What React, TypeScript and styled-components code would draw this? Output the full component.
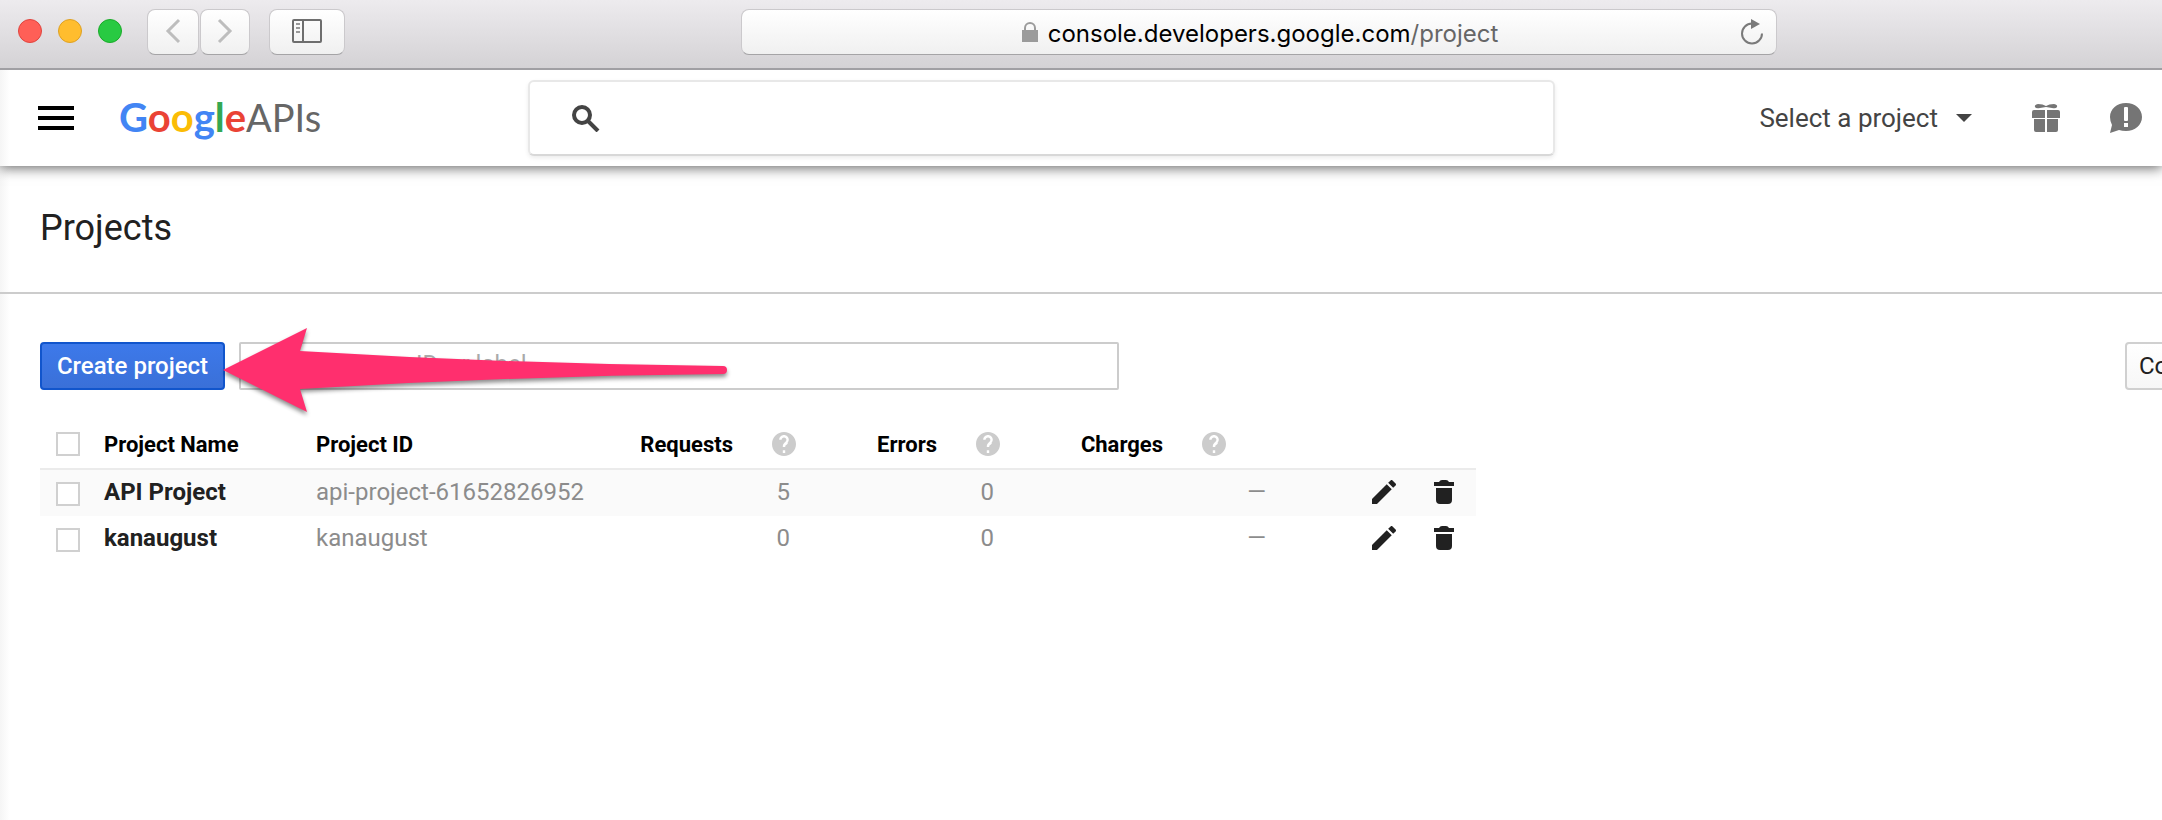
import React from "react";
import styled, { createGlobalStyle } from "styled-components";

const GlobalStyle = createGlobalStyle`
  *, *::before, *::after { box-sizing: border-box; }
  body {
    margin: 0;
    background: #fff;
    color: #212121;
    font-family: Roboto, "Liberation Sans", sans-serif;
    font-size: 24px;
    overflow-x: clip;
  }
  button, input { font: inherit; color: inherit; }
  svg { display: block; flex: none; }
`;

/* Browser chrome */

const BrowserBar = styled.header`
  display: flex;
  align-items: flex-start;
  height: 70px;
  padding: 9px 0 0 18px;
  background: linear-gradient(#edebee, #d4d2d5);
  border-bottom: 2px solid #a09fa3;
`;

const WindowControls = styled.div`
  display: flex;
  gap: 16px;
  padding-top: 10px;
  margin-right: 25px;
`;

const Light = styled.button<{ $fill: string; $edge: string }>`
  width: 24px;
  height: 24px;
  padding: 0;
  border-radius: 50%;
  border: 1px solid ${(p) => p.$edge};
  background: ${(p) => p.$fill};
`;

const ChromeButton = styled.button<{ $width: number; $gap?: number }>`
  display: flex;
  align-items: center;
  justify-content: center;
  flex: none;
  width: ${(p) => p.$width}px;
  height: 46px;
  margin-right: ${(p) => p.$gap ?? 0}px;
  padding: 0 0 2px;
  border: 1px solid #cbc9cc;
  border-bottom-color: #a5a4a6;
  border-radius: 8px;
  background: linear-gradient(#fff, #f0f0f0);
`;

const AddressField = styled.div`
  display: flex;
  align-items: center;
  flex: 1;
  height: 46px;
  margin: 0 385px 0 396px;
  padding: 0 12px 0 38px;
  border: 1px solid #cbc9cc;
  border-bottom-color: #a5a4a6;
  border-radius: 8px;
  background: linear-gradient(#fff, #f0f0f0);
`;

const Address = styled.div`
  display: flex;
  flex: 1;
  align-items: center;
  justify-content: center;
  gap: 10px;
  padding-top: 2px;
  color: #000;
  font-family: Inter, "Liberation Sans", sans-serif;
  font-size: 24px;

  svg { margin-bottom: 2px; }
`;

const AddressPath = styled.span`
  color: #666;
`;

const PlainButton = styled.button`
  display: flex;
  align-items: center;
  padding: 0;
  border: 0;
  background: none;
`;

/* Console header */

const Console = styled.div`
  min-height: calc(100vh - 70px);
  background: linear-gradient(to right, #f5f5f5, #fff 10px);
`;

const TopBar = styled.header`
  position: relative;
  display: flex;
  align-items: center;
  height: 96px;
  padding: 0 20px 0 38px;
  box-shadow: 0 2px 12px rgba(0, 0, 0, 0.6);
  background: linear-gradient(to right, #f5f5f5, #fff 10px);
  clip-path: inset(0 0 -20px 0);
`;

const Logo = styled.a`
  display: flex;
  align-items: baseline;
  width: 205px;
  margin: 0 204px 2px 45px;
  color: #666;
  font-family: Lato, sans-serif;
  font-size: 38px;
  line-height: 48px;
  text-decoration: none;
`;

const Wordmark = styled.span`
  font-size: 40px;
  font-weight: 700;
`;

const Letter = styled.span<{ $color: string }>`
  color: ${(p) => p.$color};
`;

const SearchBox = styled.label`
  display: flex;
  align-items: center;
  flex: 1;
  height: 76px;
  padding: 0 40px 0 42px;
  gap: 24px;
  border: 2px solid #e8e8e8;
  border-bottom-color: #d8d8d8;
  border-radius: 6px;
  background: #fff;
  box-shadow: 0 2px 4px rgba(0, 0, 0, 0.08);
`;

const SearchInput = styled.input`
  flex: 1;
  min-width: 0;
  border: 0;
  outline: 0;
  background: none;
`;

const ProjectPicker = styled.button`
  display: flex;
  align-items: center;
  gap: 18px;
  margin: 0 60px 0 204px;
  padding: 0;
  border: 0;
  background: none;
  color: #444;
  font-size: 26px;
  white-space: nowrap;
`;

const HeaderActions = styled.div`
  display: flex;
  align-items: center;
  gap: 49px;
`;

/* Page body */

const TitleBar = styled.div`
  padding: 40px 40px 42px;
  border-bottom: 2px solid #ccc;
`;

const Title = styled.h1`
  margin: 0;
  font-size: 36px;
  font-weight: 400;
  line-height: 44px;
`;

const Actions = styled.div`
  position: relative;
  display: flex;
  margin: 48px -103px 0 40px;
`;

const CreateButton = styled.button`
  flex: none;
  width: 185px;
  height: 48px;
  padding: 0;
  border: 2px solid #1155cc;
  border-radius: 4px;
  background: linear-gradient(#3d79ea, #3a70d8);
  color: #fff;
  font-weight: 500;
`;

const FilterInput = styled.input`
  width: 880px;
  height: 48px;
  margin-left: 14px;
  padding: 0 14px 4px;
  border: 2px solid #ccc;
  border-radius: 2px;
  background: #fff;
  &::placeholder { color: #aaa; opacity: 1; }
`;

const ColumnsButton = styled.button`
  width: 140px;
  height: 48px;
  margin-left: auto;
  padding: 0 12px;
  border: 2px solid #d0d0d0;
  border-radius: 4px;
  background: linear-gradient(#fff, #f7f7f7);
  text-align: left;
`;

const Pointer = styled.svg`
  position: absolute;
  left: 182px;
  top: -16px;
  pointer-events: none;
  filter: drop-shadow(0 3px 2px rgba(0, 0, 0, 0.45));
`;

const ProjectTable = styled.table`
  width: 1436px;
  max-width: calc(100% - 80px);
  margin: 28px 40px 0;
  border-collapse: separate;
  border-spacing: 0;
  table-layout: fixed;
  white-space: nowrap;
`;

const Column = styled.col<{ $width?: number }>`
  width: ${(p) => (p.$width ? `${p.$width}px` : "auto")};
`;

const HeadCell = styled.th<{ $inset?: number }>`
  height: 52px;
  padding: 2px ${(p) => p.$inset ?? 0}px 0 0;
  border-bottom: 2px solid #ebebeb;
  color: #000;
  font-size: 22px;
  font-weight: 700;
  text-align: left;
`;

const HeadMetric = styled.div`
  display: flex;
  align-items: center;
  justify-content: flex-end;
  gap: 39px;
`;

const Row = styled.tr`
  &:nth-child(odd) { background: #fafafa; }
`;

const Cell = styled.td<{ $strong?: boolean; $inset?: number }>`
  height: 46px;
  padding: 0 ${(p) => p.$inset ?? 0}px 2px 0;
  color: ${(p) => (p.$strong ? "#212121" : "#8c8c8c")};
  font-weight: ${(p) => (p.$strong ? 700 : 400)};
  text-align: ${(p) => (p.$inset === undefined ? "left" : "right")};
`;

const Tick = styled.input`
  appearance: none;
  display: block;
  width: 24px;
  height: 24px;
  margin: 0 0 0 16px;
  border: 2px solid #d0d0d0;
  background: #fff;
`;

const TickCell = styled(Cell)`
  padding: 2px 0 0;
`;

const RowActions = styled.div`
  display: flex;
  gap: 38px;
  padding-left: 106px;
`;

const HelpIcon = () => (
  <svg width="24" height="24" viewBox="2 2 20 20" fill="#ccc" aria-hidden="true">
    <path d="M12 2C6.48 2 2 6.48 2 12s4.48 10 10 10 10-4.48 10-10S17.52 2 12 2zm1 17.500h-2v-2.300h2v2.300zm2.07-7.750l-.9.92C13.45 12.9 13 13.5 13 14.500h-2v-.5c0-1.1.45-2.1 1.17-2.83l1.24-1.26c.37-.36.59-.86.59-1.41 0-1.1-.9-2-2-2s-2 .9-2 2H8c0-2.21 1.79-4 4-4s4 1.79 4 4c0 .88-.36 1.68-.93 2.25z" />
  </svg>
);

const PencilIcon = () => (
  <svg width="24" height="24" viewBox="3 3 18 18" fill="#212121" aria-hidden="true">
    <path d="M3 17.25V21h3.75L17.81 9.94l-3.75-3.75L3 17.25zM20.71 7.04c.39-.39.39-1.02 0-1.41l-2.34-2.34c-.39-.39-1.02-.39-1.41 0l-1.83 1.83 3.75 3.75 1.83-1.83z" />
  </svg>
);

const TrashIcon = () => (
  <svg width="20" height="24" viewBox="0 0 20 24" fill="#212121" aria-hidden="true">
    <path d="M0 2h5q1-2 3-2h4q2 0 3 2h5v4H0zM2 8h16v12q0 4-4 4H6q-4 0-4-4z" />
  </svg>
);

type Project = { name: string; id: string; requests: string; errors: string };

const projects: Project[] = [
  { name: "API Project", id: "api-project-61652826952", requests: "5", errors: "0" },
  { name: "kanaugust", id: "kanaugust", requests: "0", errors: "0" },
];

const wordmark: [string, string][] = [
  ["G", "#4285f4"],
  ["o", "#ea4335"],
  ["o", "#fbbc05"],
  ["g", "#4285f4"],
  ["l", "#34a853"],
  ["e", "#ea4335"],
];

const metrics = [
  { label: "Requests", inset: 0 },
  { label: "Errors", inset: 0 },
  { label: "Charges", inset: 40 },
];

export default function App() {
  return (
    <>
      <GlobalStyle />
      <BrowserBar>
        <WindowControls>
          <Light aria-label="Close" $fill="#ff5f57" $edge="#e0443e" />
          <Light aria-label="Minimize" $fill="#ffbd2e" $edge="#dea123" />
          <Light aria-label="Zoom" $fill="#28ca42" $edge="#1aab29" />
        </WindowControls>
        <ChromeButton $width={52} $gap={1} aria-label="Back">
          <svg width="16" height="26" viewBox="0 0 16 26" fill="none" stroke="#bdbdbd" strokeWidth="3">
            <path d="M14 2L3 13l11 11" />
          </svg>
        </ChromeButton>
        <ChromeButton $width={50} $gap={19} aria-label="Forward">
          <svg width="16" height="26" viewBox="0 0 16 26" fill="none" stroke="#bdbdbd" strokeWidth="3">
            <path d="M2 2l11 11L2 24" />
          </svg>
        </ChromeButton>
        <ChromeButton $width={76} aria-label="Show sidebar">
          <svg width="30" height="24" viewBox="0 0 30 24" fill="none" stroke="#6e6e6e" strokeWidth="2">
            <rect x="1" y="1" width="28" height="22" rx="1" />
            <path d="M11 1v22" />
            <path d="M4 5h4M4 9h4M4 13h4" stroke="#999" />
          </svg>
        </ChromeButton>
        <AddressField>
          <Address>
            <svg width="16" height="20" viewBox="0 0 16 20" aria-hidden="true">
              <path d="M3 9V6a5 5 0 0 1 10 0v3" fill="none" stroke="#9b9b9b" strokeWidth="2" />
              <path d="M0 8h16v12H0z" fill="#9b9b9b" />
            </svg>
            <span>
              console.developers.google.com<AddressPath>/project</AddressPath>
            </span>
          </Address>
          <PlainButton aria-label="Reload">
            <svg width="24" height="26" viewBox="0 0 24 26" aria-hidden="true">
              <path d="M12 4.500a10 10 0 1 0 10 10" fill="none" stroke="#7a7a7a" strokeWidth="2" />
              <path d="M11 0l9 5-9 5z" fill="#7a7a7a" />
            </svg>
          </PlainButton>
        </AddressField>
      </BrowserBar>

      <Console>
        <TopBar>
          <PlainButton aria-label="Menu">
            <svg width="36" height="24" viewBox="0 0 36 24" aria-hidden="true">
              <path d="M0 0h36v4H0zM0 10h36v4H0zM0 20h36v4H0z" />
            </svg>
          </PlainButton>
          <Logo href="#">
            <Wordmark>
              {wordmark.map(([letter, color], i) => (
                <Letter key={i} $color={color}>{letter}</Letter>
              ))}
            </Wordmark>
            <span>APIs</span>
          </Logo>
          <SearchBox>
            <svg width="28" height="28" viewBox="0 0 28 28" fill="none" stroke="#444" strokeWidth="4" aria-hidden="true">
              <circle cx="10" cy="11" r="8" />
              <path d="M16 17l10 10" />
            </svg>
            <SearchInput aria-label="Search" />
          </SearchBox>
          <ProjectPicker>
            Select a project
            <svg width="16" height="8" viewBox="0 0 16 8" fill="#444" aria-hidden="true">
              <path d="M0 0h16l-8 8z" />
            </svg>
          </ProjectPicker>
          <HeaderActions>
            <PlainButton aria-label="Free trial">
              <svg width="28" height="28" viewBox="0 0 28 28" fill="#757575" aria-hidden="true">
                <path d="M14 2q3-2 8-2 4 1 3 3-1 2-5 1l-6-1-6 1Q4 5 3 3 2 1 6 0q5 0 8 2z" />
                <path d="M2 6h11v8H0V8q0-2 2-2zM15 6h11q2 0 2 2v6H15zM2 15h11v13H4q-2 0-2-2zM15 15h11v11q0 2-2 2h-9z" />
              </svg>
            </PlainButton>
            <PlainButton aria-label="Feedback">
              <svg width="33" height="30" viewBox="0 0 33 30" aria-hidden="true">
                <path d="M17 0C26 0 33 6 33 14S26 28 17 28q-4 0-7-1L1 30l2-8Q1 18 1 14C1 6 8 0 17 0z" fill="#757575" />
                <rect x="15" y="4" width="4" height="14" rx="1" fill="#fff" />
                <path d="M15 20h4v4h-4z" fill="#fff" />
              </svg>
            </PlainButton>
          </HeaderActions>
        </TopBar>

        <main>
          <TitleBar>
            <Title>Projects</Title>
          </TitleBar>
          <Actions>
            <CreateButton>Create project</CreateButton>
            <FilterInput aria-label="Filter projects" placeholder="Filter by name, ID, or label" />
            <ColumnsButton>Columns</ColumnsButton>
            <Pointer width="508" height="90" viewBox="0 0 508 90" aria-hidden="true">
              <path d="M1 44L85 2l-7 23Q290 38 501 40a4 4 0 0 1 0 8Q290 50 78 63l7 23z" fill="#ff2f6e" />
            </Pointer>
          </Actions>

          <ProjectTable>
            <colgroup>
              <Column $width={64} />
              <Column $width={212} />
              <Column $width={276} />
              <Column $width={204} />
              <Column $width={204} />
              <Column $width={266} />
              <Column />
            </colgroup>
            <thead>
              <tr>
                <HeadCell><Tick type="checkbox" aria-label="Select all projects" /></HeadCell>
                <HeadCell>Project Name</HeadCell>
                <HeadCell>Project ID</HeadCell>
                {metrics.map((metric) => (
                  <HeadCell key={metric.label} $inset={metric.inset}>
                    <HeadMetric>{metric.label}<HelpIcon /></HeadMetric>
                  </HeadCell>
                ))}
                <HeadCell />
              </tr>
            </thead>
            <tbody>
              {projects.map((project) => (
                <Row key={project.id}>
                  <TickCell><Tick type="checkbox" aria-label={`Select ${project.name}`} /></TickCell>
                  <Cell $strong>{project.name}</Cell>
                  <Cell>{project.id}</Cell>
                  <Cell $inset={6}>{project.requests}</Cell>
                  <Cell $inset={6}>{project.errors}</Cell>
                  <Cell $inset={0}>—</Cell>
                  <Cell>
                    <RowActions>
                      <PlainButton aria-label={`Edit ${project.name}`}><PencilIcon /></PlainButton>
                      <PlainButton aria-label={`Delete ${project.name}`}><TrashIcon /></PlainButton>
                    </RowActions>
                  </Cell>
                </Row>
              ))}
            </tbody>
          </ProjectTable>
        </main>
      </Console>
    </>
  );
}
